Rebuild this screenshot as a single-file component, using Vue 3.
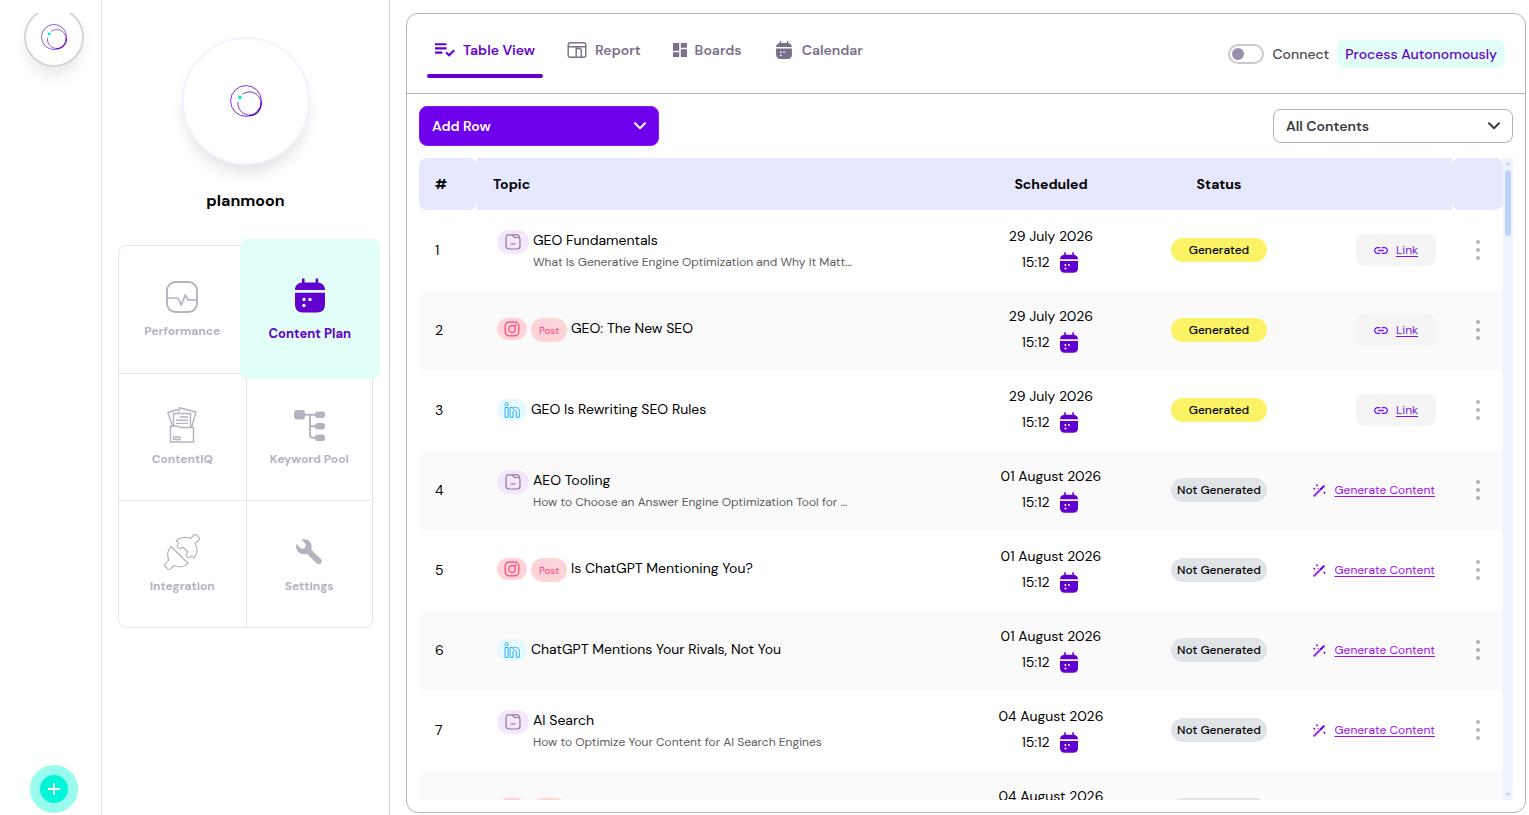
<script setup>
import { ref } from 'vue'

const menu = [
  { label: 'Performance', icon: 'pulse', w: 32, h: 32 },
  { label: 'Content Plan', icon: 'calendar', w: 30, h: 35, active: true },
  { label: 'ContentIQ', icon: 'folder', w: 30, h: 36 },
  { label: 'Keyword Pool', icon: 'tree', w: 31, h: 31 },
  { label: 'Integration', icon: 'plug', w: 36, h: 36 },
  { label: 'Settings', icon: 'wrench', w: 26, h: 26 },
]

const tabs = [
  { id: 'table', label: 'Table View', icon: 'list-check', w: 20, h: 16 },
  { id: 'report', label: 'Report', icon: 'report', w: 20, h: 16 },
  { id: 'boards', label: 'Boards', icon: 'boards', w: 14, h: 14 },
  { id: 'calendar', label: 'Calendar', icon: 'calendar', w: 20, h: 18 },
]
const activeTab = ref('table')

const connected = ref(false)
const filter = ref('all')

const rows = [
  { type: 'blog', title: 'GEO Fundamentals', sub: 'What Is Generative Engine Optimization and Why It Matt…', date: '29 July 2026', done: true },
  { type: 'instagram', title: 'GEO: The New SEO', date: '29 July 2026', done: true },
  { type: 'linkedin', title: 'GEO Is Rewriting SEO Rules', date: '29 July 2026', done: true },
  { type: 'blog', title: 'AEO Tooling', sub: 'How to Choose an Answer Engine Optimization Tool for …', date: '01 August 2026', done: false },
  { type: 'instagram', title: 'Is ChatGPT Mentioning You?', date: '01 August 2026', done: false },
  { type: 'linkedin', title: 'ChatGPT Mentions Your Rivals, Not You', date: '01 August 2026', done: false },
  { type: 'blog', title: 'AI Search', sub: 'How to Optimize Your Content for AI Search Engines', date: '04 August 2026', done: false },
  { type: 'instagram', title: 'AI Search', date: '04 August 2026', done: false },
]
</script>

<template>
  <div class="app">
    <svg class="sprite" aria-hidden="true">
      <symbol id="logo" viewBox="0 0 32 32">
        <circle cx="16" cy="16" r="15.4" fill="none" stroke="#7a35d9" stroke-width="1" />
        <path d="M12.6 9.2A11.6 11.6 0 1 1 8 17" fill="none" stroke="#7a35d9" stroke-width="1" />
        <path d="M31 17a11.6 11.6 0 0 1-12 13.6" fill="none" stroke="#5a00c8" stroke-width="1.2" />
        <circle cx="10" cy="12.4" r="1.8" fill="#00f0d0" />
      </symbol>
      <symbol id="pulse" viewBox="0 0 32 32">
        <rect x="1" y="1" width="30" height="30" rx="8.5" fill="none" stroke="currentColor" stroke-width="1.9" />
        <path d="M1 17h9.5c1.4 0 2 .6 2.6 2l2.2 5 4-10 1.8 3.5c.5 1 1 1.4 2.3 1.4H31" fill="none" stroke="currentColor" stroke-width="1.7" stroke-linejoin="round" />
      </symbol>
      <symbol id="calendar" viewBox="0 0 30 34">
        <path d="M7 0h2.6v4h11V0h2.6v4.1C27 4.5 30 7 30 11.5H0C0 7 3 4.5 7 4.1z" fill="currentColor" />
        <path d="M0 14.3h30V26c0 5-3 8-8 8H8c-5 0-8-3-8-8z" fill="currentColor" />
        <g fill="#fff">
          <circle cx="9" cy="21" r="1.7" /><circle cx="15" cy="21" r="1.7" /><circle cx="9" cy="27" r="1.7" />
        </g>
      </symbol>
      <symbol id="folder" viewBox="0 0 30 36">
        <g fill="none" stroke="currentColor" stroke-width="1.4" stroke-linejoin="round">
          <path d="M3.500 19V35h23V20.500H13l-2-1.500z" />
          <path d="M6.500 19V6.500h17v14" />
          <path d="M5.500 19 .8 5.500 11 2.500M11.500 5.500l1-4.700L29 5l-4.500 15.500" />
          <path d="M13 10h8M9 13.200h12M9 16.400h12" />
          <path d="M6.500 30h6.500v2.500H6.500z" />
        </g>
      </symbol>
      <symbol id="tree" viewBox="0 0 31 31">
        <g fill="currentColor">
          <rect x="0" y="0" width="11" height="9.5" rx="3" />
          <rect x="21" y="1.5" width="10" height="6.5" rx="2.5" />
          <rect x="21" y="13" width="10" height="6.5" rx="2.5" />
          <rect x="21" y="24.5" width="10" height="6.5" rx="2.5" />
        </g>
        <path d="M10 4.700h12M16 4.700V25q0 2.700 2.700 2.700H22M16 16.200h6" fill="none" stroke="currentColor" stroke-width="1.9" />
      </symbol>
      <symbol id="plug" viewBox="0 0 36 36">
        <g fill="none" stroke="currentColor" stroke-width="1.2" stroke-linejoin="round">
          <path d="M7.300 12.700 24 29.300c-3.500 4-9.500 4.500-14 2.200l-4 4c-.8.5-1.200.4-1.800-.2L.9 32c-.6-.6-.5-1.200 0-1.800l4-4C2.500 21 3.500 16.500 7.300 12.700z" />
          <path d="M12.200 6.700C16 3 22 2.500 26.500 4.500l4-4c.6-.5 1.200-.4 1.800.2l2.900 3c.6.600.5 1.200 0 1.800l-4 4C33.500 14 33.500 20 30 24.200l-2.300-2.300c-2 2.300-3.500 2-4.700.8-1.400-1.400-1-3 .8-4.700l-5-5c-1.700 1.800-3.400 2.200-4.800.8-1.400-1.500-1-3 .7-4.700z" />
        </g>
      </symbol>
      <symbol id="wrench" viewBox="0 0 26 26">
        <path d="M5.600.7C9.500-.6 13.500 1 15 4.500c.8 2 .8 4 .2 6l9.600 9.500c1.300 1.300 1.300 3.200.2 4.300-1.200 1.300-3.200 1.300-4.500 0l-9.700-9.500C6.500 16 2.500 14.500.9 11 .1 9-.1 7 .4 5l4.400 4.300c1 .8 2.500.7 3.300-.1l1.200-1.200c.9-.9.900-2.300 0-3.200z" fill="currentColor" />
      </symbol>
      <symbol id="list-check" viewBox="3 5 19 15">
        <path d="M3 10h11v2H3zM3 6h11v2H3zM3 14h7v2H3zM20.590 11.930l-4.250 4.240-2.120-2.120-1.410 1.410 3.530 3.540L22 13.340z" fill="currentColor" />
      </symbol>
      <symbol id="report" viewBox="0 0 19 16">
        <g fill="none" stroke="currentColor" stroke-width="1.4">
          <rect x=".7" y=".7" width="17.6" height="14.6" rx="2" />
          <path d="M.7 4.800h17.600M8.700 4.800v10.500M8.700 6.500h3.300q1.800 0 1.800 1.800v7" />
        </g>
      </symbol>
      <symbol id="boards" viewBox="3 3 18 18">
        <path d="M3 13h8V3H3zm0 8h8v-6H3zm10 0h8V11h-8zm0-18v6h8V3z" fill="currentColor" />
      </symbol>
      <symbol id="chevron" viewBox="0 0 12 8">
        <path d="M1 1.200l5 5 5-5" fill="none" stroke="currentColor" stroke-width="2" stroke-linecap="round" stroke-linejoin="round" />
      </symbol>
      <symbol id="blog" viewBox="0 0 16 16">
        <g fill="none" stroke="currentColor" stroke-width="1.2">
          <path d="M6 .9H4Q1 .9 1 4v8q0 3 3 3h8q3 0 3-3V5.500q0-2-2-2H9.500L7.500 1.400Q7 .9 6 .9z" />
          <path d="M7 .9h5.500q1.800 0 2 3" />
          <path d="M5.800 10h4.400" />
        </g>
      </symbol>
      <symbol id="instagram" viewBox="0 0 16 16">
        <g fill="none" stroke="currentColor" stroke-width="1.2">
          <rect x="1.2" y="1.2" width="13.6" height="13.6" rx="3.8" />
          <circle cx="8" cy="8" r="3.3" />
        </g>
        <circle cx="12" cy="4.2" r=".9" fill="currentColor" />
      </symbol>
      <symbol id="linkedin" viewBox="0 0 16 16">
        <g fill="none" stroke="currentColor" stroke-width="1">
          <circle cx="2.5" cy="2.3" r="1.6" />
          <path d="M1 5.500h3v9.800H1zM6 5.500h2.800v1.200c1.800-2 6.500-1.900 6.500 2.800v5.800h-3V10c0-2.600-3.300-2.500-3.300 0v5.300H6z" />
        </g>
      </symbol>
      <symbol id="link" viewBox="2 7 20 10">
        <path d="M3.900 12c0-1.710 1.390-3.100 3.100-3.100h4V7H7c-2.760 0-5 2.240-5 5s2.240 5 5 5h4v-1.900H7c-1.710 0-3.100-1.390-3.100-3.100zM8 13h8v-2H8zm9-6h-4v1.900h4c1.710 0 3.100 1.390 3.100 3.100s-1.390 3.100-3.100 3.100h-4V17h4c2.760 0 5-2.240 5-5s-2.240-5-5-5z" fill="currentColor" />
      </symbol>
      <symbol id="wand" viewBox="0 0 13 13">
        <path d="M1.300 11.700 8 5" fill="none" stroke="#a528f5" stroke-width="2" stroke-linecap="round" />
        <path d="M8 5l2.800-2.800" fill="none" stroke="#6a00d8" stroke-width="2" stroke-linecap="round" />
        <g fill="#7a10e0">
          <path d="M4 0l1.200 1.200L4 2.400 2.800 1.200zM1.300 3.600l1.200 1.200L1.300 6 .1 4.800zM11.500 7.400l1.300 1.300-1.300 1.300-1.300-1.300z" />
          <circle cx="5" cy="4.6" r=".7" />
        </g>
      </symbol>
    </svg>

    <nav class="rail">
      <div class="rail-list">
        <button type="button" class="rail-logo" aria-label="planmoon">
          <svg width="26" height="26"><use href="#logo" /></svg>
        </button>
      </div>
      <button type="button" class="rail-add" aria-label="Add">
        <span><svg width="12" height="12" viewBox="0 0 12 12"><path d="M6 0v12M0 6h12" stroke="#fff" stroke-width="1.8" /></svg></span>
      </button>
    </nav>

    <aside class="sidebar">
      <div class="avatar"><svg width="32" height="32"><use href="#logo" /></svg></div>
      <h1>planmoon</h1>
      <div class="menu">
        <a v-for="m in menu" :key="m.label" href="#" class="menu-item" :class="{ active: m.active }" @click.prevent>
          <span class="menu-icon"><svg :width="m.w" :height="m.h"><use :href="'#' + m.icon" /></svg></span>
          {{ m.label }}
        </a>
      </div>
    </aside>

    <main class="main">
      <section class="panel">
        <header class="panel-head">
          <div class="tabs">
            <button v-for="t in tabs" :key="t.id" type="button" class="tab" :class="{ active: activeTab === t.id }" @click="activeTab = t.id">
              <svg :width="t.w" :height="t.h"><use :href="'#' + t.icon" /></svg>
              {{ t.label }}
            </button>
          </div>
          <div class="head-actions">
            <label class="switch">
              <input v-model="connected" type="checkbox" />
              <span>Connect</span>
            </label>
            <button type="button" class="process">Process Autonomously</button>
          </div>
        </header>

        <div class="toolbar">
          <button type="button" class="add-row">
            Add Row
            <svg width="12" height="8"><use href="#chevron" /></svg>
          </button>
          <div class="select">
            <select v-model="filter" aria-label="Filter contents">
              <option value="all">All Contents</option>
              <option value="done">Generated</option>
              <option value="todo">Not Generated</option>
            </select>
            <svg width="12" height="8"><use href="#chevron" /></svg>
          </div>
        </div>

        <div class="table-wrap">
          <div class="scroll">
            <table>
              <colgroup>
                <col class="c-num" />
                <col />
                <col class="c-date" />
                <col class="c-status" />
                <col class="c-action" />
                <col class="c-more" />
              </colgroup>
              <thead>
                <tr>
                  <th class="left">#</th>
                  <th class="left">Topic</th>
                  <th>Scheduled</th>
                  <th>Status</th>
                  <th></th>
                  <th></th>
                </tr>
              </thead>
              <tbody>
                <tr v-for="(r, i) in rows" :key="i">
                  <td class="num">{{ i + 1 }}</td>
                  <td>
                    <div class="topic">
                      <span class="badge" :class="r.type">
                        <svg width="16" height="16"><use :href="'#' + r.type" /></svg>
                      </span>
                      <span v-if="r.type === 'instagram'" class="badge post">Post</span>
                      <div class="topic-text">
                        <div class="title">{{ r.title }}</div>
                        <div v-if="r.sub" class="sub">{{ r.sub }}</div>
                      </div>
                    </div>
                  </td>
                  <td class="date">
                    <div>{{ r.date }}</div>
                    <div class="time">15:12 <svg width="18" height="21"><use href="#calendar" /></svg></div>
                  </td>
                  <td class="status">
                    <span class="pill" :class="{ done: r.done }">{{ r.done ? 'Generated' : 'Not Generated' }}</span>
                  </td>
                  <td>
                    <div class="action">
                      <a v-if="r.done" href="#" class="link" @click.prevent>
                        <svg width="14" height="7"><use href="#link" /></svg>
                        <span>Link</span>
                      </a>
                      <a v-else href="#" class="generate" @click.prevent>
                        <svg width="13" height="13"><use href="#wand" /></svg>
                        <span>Generate Content</span>
                      </a>
                    </div>
                  </td>
                  <td>
                    <button type="button" class="more" aria-label="More">
                      <i></i><i></i><i></i>
                    </button>
                  </td>
                </tr>
              </tbody>
            </table>
          </div>
          <div class="scrollbar">
            <svg width="6" height="3" viewBox="0 0 6 3"><path d="M0 3l3-3 3 3z" fill="#bed3fb" /></svg>
            <div class="thumb"></div>
            <svg width="6" height="3" viewBox="0 0 6 3"><path d="M0 0l3 3 3-3z" fill="#bed3fb" /></svg>
          </div>
        </div>
      </section>
    </main>
  </div>
</template>

<style>
body {
  margin: 0;
  background: #fff;
}
</style>

<style scoped>
.app {
  display: flex;
  height: 100vh;
  overflow: hidden;
  font-family: "DM Sans", Inter, "Open Sans", sans-serif;
  font-size: 14px;
  color: #000;
}

.app * {
  box-sizing: border-box;
}

.sprite {
  position: absolute;
  width: 0;
  height: 0;
}

svg {
  display: block;
  flex-shrink: 0;
}

button,
select {
  font-family: inherit;
  font-size: 14px;
  border: none;
  background: none;
  padding: 0;
  cursor: pointer;
}

/* rail */
.rail {
  width: 102px;
  flex-shrink: 0;
  border-right: 1px solid #e2e2e4;
  display: flex;
  flex-direction: column;
  align-items: center;
  padding: 13px 0 2px 7px;
}

.rail-list {
  flex: 1;
  width: 100%;
  overflow: hidden;
  padding-right: 1px;
}

.rail-logo {
  width: 60px;
  height: 60px;
  margin: -6px auto 0;
  border: 2px solid #d6d6d8;
  border-radius: 50%;
  background: #fff;
  display: flex;
  align-items: center;
  justify-content: center;
  box-shadow: 0 10px 15px -3px rgba(0, 0, 0, 0.1);
}

.rail-add {
  width: 48px;
  height: 48px;
  border-radius: 50%;
  background: #99fbee;
  display: flex;
  align-items: center;
  justify-content: center;
}

.rail-add span {
  width: 28px;
  height: 28px;
  border-radius: 50%;
  background: #00f5d9;
  display: flex;
  align-items: center;
  justify-content: center;
}

/* sidebar */
.sidebar {
  width: 288px;
  flex-shrink: 0;
  border-right: 1px solid #d4d4d8;
  padding: 37px 16px 0;
}

.avatar {
  width: 128px;
  height: 128px;
  margin: 0 auto;
  border: 2px solid #f4f2fd;
  border-radius: 50%;
  background: #fff;
  display: flex;
  align-items: center;
  justify-content: center;
  box-shadow: 0 10px 15px -3px rgba(0, 0, 0, 0.12);
}

.sidebar h1 {
  margin: 24px 0 32px;
  font-size: 16px;
  line-height: 24px;
  font-weight: 700;
  text-align: center;
}

.menu {
  display: grid;
  grid-template-columns: 1fr 1fr;
  grid-auto-rows: 127px;
  border: 1px solid #e4e4e9;
  border-radius: 8px;
}

.menu-item {
  display: flex;
  flex-direction: column;
  align-items: center;
  gap: 6px;
  padding-top: 33px;
  font-size: 12px;
  line-height: 20px;
  font-weight: 700;
  color: #b6b3c0;
  text-decoration: none;
}

.menu-item:nth-child(even) {
  border-left: 1px solid #e4e4e9;
}

.menu-item:nth-child(n + 3) {
  border-top: 1px solid #e4e4e9;
}

.menu-icon {
  height: 36px;
  display: flex;
  align-items: center;
}

.menu-item.active {
  z-index: 1;
  margin: -7px -8px -6px -6px;
  padding-top: 38px;
  gap: 11px;
  border: none;
  border-radius: 8px;
  background: #e2fef9;
  color: #6200cf;
  font-size: 13px;
}

/* panel */
.main {
  flex: 1;
  min-width: 0;
  padding: 13px 3px 2px 16px;
}

.panel {
  height: 100%;
  display: flex;
  flex-direction: column;
  border: 1px solid #b3b1bd;
  border-radius: 12px;
}

.panel-head {
  height: 80px;
  flex-shrink: 0;
  display: flex;
  justify-content: space-between;
  align-items: center;
  padding: 0 20px;
  border-bottom: 1px solid #b3b1bd;
}

.tabs {
  display: flex;
  gap: 16px;
  margin-bottom: 8px;
}

.tab {
  display: flex;
  align-items: center;
  gap: 8px;
  height: 56px;
  padding: 0 8px;
  font-weight: 600;
  color: #7b6f8a;
  position: relative;
}

.tab.active {
  color: #6200cf;
}

.tab.active::after {
  content: "";
  position: absolute;
  left: 0;
  right: 0;
  bottom: 0;
  height: 4px;
  border-radius: 2px;
  background: #6200cf;
}

.head-actions {
  display: flex;
  align-items: center;
  gap: 8px;
}

.switch {
  display: flex;
  align-items: center;
  gap: 8px;
  color: #4b4b50;
  font-weight: 500;
  cursor: pointer;
}

.switch input {
  appearance: none;
  width: 36px;
  height: 20px;
  margin: 0;
  padding: 2px;
  border: 2px solid #cbc8d2;
  border-radius: 10px;
  background: #fff;
}

.switch input::before {
  content: "";
  display: block;
  width: 12px;
  height: 12px;
  border-radius: 50%;
  background: #9b8fb0;
}

.switch input:checked::before {
  margin-left: 16px;
  background: #6200cf;
}

.process {
  height: 28px;
  padding: 0 8px;
  border-radius: 8px;
  background: #e2fef9;
  color: #6200cf;
  font-weight: 500;
}

.toolbar {
  display: flex;
  align-items: center;
  justify-content: space-between;
  padding: 12px;
}

.add-row {
  width: 240px;
  height: 40px;
  display: flex;
  align-items: center;
  justify-content: space-between;
  padding: 0 12px;
  border: 1px solid #8420f5;
  border-radius: 8px;
  background: #6f00eb;
  color: #fff;
  font-weight: 600;
}

.select {
  position: relative;
  width: 240px;
  color: #3b3b40;
}

.select select {
  appearance: none;
  width: 100%;
  height: 34px;
  padding: 0 12px;
  border: 1px solid #b3b1bd;
  border-radius: 8px;
  color: #3b3b40;
  font-weight: 600;
}

.select svg {
  position: absolute;
  right: 13px;
  top: 13px;
  pointer-events: none;
}

/* table */
.table-wrap {
  flex: 1;
  min-height: 0;
  display: flex;
  margin: 0 12px 12px;
}

.scroll {
  flex: 1;
  min-width: 0;
  overflow-y: auto;
  scrollbar-width: none;
}

.scrollbar {
  width: 10px;
  display: flex;
  flex-direction: column;
  align-items: center;
  padding: 4px 0;
  background: #edf4ff;
}

.thumb {
  width: 6px;
  height: 66px;
  margin: 5px 0 auto;
  border-radius: 3px;
  background: #bed3fb;
}

table {
  width: 100%;
  table-layout: fixed;
  border-collapse: separate;
  border-spacing: 0;
}

.c-num { width: 58px; }
.c-date { width: 216px; }
.c-status { width: 120px; }
.c-action { width: 173px; }
.c-more { width: 51px; }

th {
  position: sticky;
  top: 0;
  z-index: 1;
  height: 52px;
  padding: 0 16px;
  background: #e6e8ff;
  font-weight: 700;
}

th.left {
  text-align: left;
}

th:first-child,
th:last-child {
  border-radius: 8px;
}

td {
  height: 80px;
  padding: 0;
}

tbody tr:nth-child(even) {
  background: #fafafa;
}

.num {
  padding-left: 16px;
}

.topic {
  display: flex;
  align-items: flex-start;
  gap: 4px;
  padding-left: 20px;
}

.badge {
  width: 30px;
  height: 22px;
  flex-shrink: 0;
  border-radius: 12px;
  display: flex;
  align-items: center;
  justify-content: center;
}

.badge.blog {
  width: 32px;
  height: 24px;
  background: #f5e6ff;
  color: #8b7a9c;
}

.badge.instagram,
.badge.post {
  background: #ffd4d8;
  color: #ff3d78;
}

.badge.linkedin {
  background: #e6f9ff;
  color: #29b2f0;
}

.badge.post {
  width: 36px;
  height: 24px;
  font-size: 10px;
}

.topic-text {
  white-space: nowrap;
}

.title {
  line-height: 20px;
}

.sub {
  margin-top: 4px;
  font-size: 12px;
  line-height: 16px;
  color: #5c5c60;
}

.date {
  padding-bottom: 2px;
  text-align: center;
  line-height: 26px;
}

.time {
  display: flex;
  align-items: center;
  justify-content: center;
  gap: 10px;
  padding-right: 3px;
}

.time svg {
  color: #6200cf;
}

.status {
  text-align: center;
}

.pill {
  display: inline-block;
  width: 96px;
  border-radius: 12px;
  background: #e0e4e8;
  font-size: 12px;
  line-height: 24px;
  font-weight: 500;
  white-space: nowrap;
}

.pill.done {
  background: #fbf266;
}

.action {
  display: flex;
  justify-content: flex-end;
  padding-right: 16px;
  font-size: 12px;
}

.link,
.generate {
  display: flex;
  align-items: center;
  gap: 8px;
  height: 32px;
  text-decoration: none;
  white-space: nowrap;
}

.link span,
.generate span {
  text-decoration: underline;
  text-underline-offset: 2px;
}

.link {
  width: 80px;
  justify-content: center;
  border-radius: 8px;
  background: #f5f5f5;
  color: #7318f0;
}

.generate {
  padding-right: 1px;
  color: #9c0df0;
}

.more {
  display: flex;
  flex-direction: column;
  align-items: center;
  gap: 4px;
  width: 24px;
  margin: 0 auto;
}

.more i {
  width: 4px;
  height: 4px;
  border-radius: 50%;
  background: #b3b1bd;
}
</style>
